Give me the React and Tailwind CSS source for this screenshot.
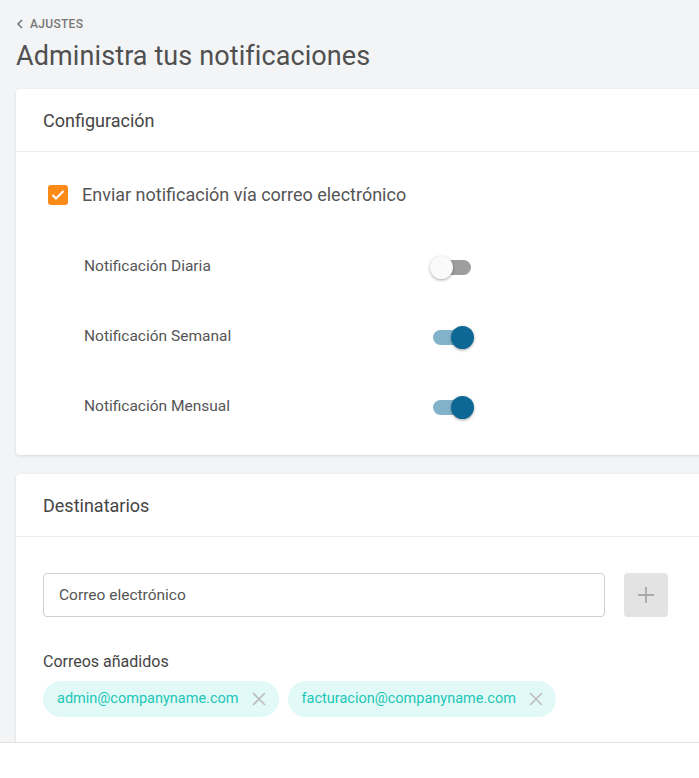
import { useState } from "react";

function Toggle({ on, onChange }) {
  return (
    <button
      type="button"
      onClick={() => onChange(!on)}
      className="relative w-[44px] h-[24px] flex items-center"
    >
      <span
        className={
          on
            ? "absolute left-[3px] w-[38px] h-[15px] rounded-full bg-[#82b3cb]"
            : "absolute left-[3px] w-[38px] h-[15px] rounded-full bg-[#9e9e9e]"
        }
      />
      <span
        className={
          on
            ? "absolute left-[21px] w-[23px] h-[23px] rounded-full bg-[#0e6896] shadow-[0_1px_3px_rgba(0,0,0,0.35)]"
            : "absolute left-0 w-[23px] h-[23px] rounded-full bg-[#fafafa] shadow-[0_1px_3px_rgba(0,0,0,0.35)]"
        }
      />
    </button>
  );
}

function Chip({ email, onRemove }) {
  return (
    <div className="h-[36px] pl-[14px] pr-[12px] rounded-full bg-[#e2faf7] flex items-center gap-[12px]">
      <span className="text-[14.5px] text-[#1bc6b6]">{email}</span>
      <button onClick={onRemove} className="text-[#bdbdbd]">
        <svg width="16" height="16" viewBox="0 0 16 16" fill="none" stroke="currentColor" strokeWidth="1.6">
          <path d="M2 2 L14 14 M14 2 L2 14" />
        </svg>
      </button>
    </div>
  );
}

export default function App() {
  const [email, setEmail] = useState(true);
  const [daily, setDaily] = useState(false);
  const [weekly, setWeekly] = useState(true);
  const [monthly, setMonthly] = useState(true);
  const [recipients, setRecipients] = useState([
    "admin@companyname.com",
    "facturacion@companyname.com",
  ]);

  const rows = [
    { label: "Notificación Diaria", on: daily, set: setDaily },
    { label: "Notificación Semanal", on: weekly, set: setWeekly },
    { label: "Notificación Mensual", on: monthly, set: setMonthly },
  ];

  return (
    <div
      className="h-screen flex flex-col overflow-hidden bg-[#f3f4f5]"
      style={{ fontFamily: "Roboto, 'Liberation Sans', sans-serif" }}
    >
      <div className="flex-1 min-h-0 overflow-hidden">
        <div className="w-[740px] pl-4 pt-[16px]">
          {/* Breadcrumb */}
          <a href="#" className="flex items-center gap-[6px] text-[#777] h-[16px]">
            <svg width="8" height="10" viewBox="0 0 8 10" fill="none" stroke="currentColor" strokeWidth="1.6">
              <path d="M6 1 L2 5 L6 9" />
            </svg>
            <span className="text-[12px] font-medium tracking-[0.3px]">AJUSTES</span>
          </a>
          <h1 className="text-[27px] text-[#505050] mt-[8px] leading-[32px] tracking-[0.1px]">
            Administra tus notificaciones
          </h1>

          {/* Configuración */}
          <section className="mt-[17px] bg-white rounded-[4px] shadow-[0_1px_3px_rgba(0,0,0,0.12)]">
            <div className="h-[63px] px-[27px] flex items-center border-b border-[#ececec]">
              <h2 className="text-[18px] text-[#454545]">Configuración</h2>
            </div>
            <div className="px-[32px] pt-[29px] pb-[36px]">
              <label className="flex items-center gap-[14px] cursor-pointer">
                <span
                  onClick={() => setEmail(!email)}
                  className="w-[20px] h-[20px] rounded-[3px] bg-[#fb8a17] flex items-center justify-center"
                >
                  {email && (
                    <svg width="14" height="12" viewBox="0 0 14 12" fill="none" stroke="white" strokeWidth="2">
                      <path d="M1.5 6 L5 9.5 L12.5 2" />
                    </svg>
                  )}
                </span>
                <span className="text-[18px] text-[#555]">Enviar notificación vía correo electrónico</span>
              </label>

              <div className="mt-[47px] pl-[36px] flex flex-col gap-[46px]">
                {rows.map((r) => (
                  <div key={r.label} className="flex items-center w-[390px] justify-between">
                    <span className="text-[15.5px] text-[#555]">{r.label}</span>
                    <Toggle on={r.on} onChange={r.set} />
                  </div>
                ))}
              </div>
            </div>
          </section>

          {/* Destinatarios */}
          <section className="mt-[19px] bg-white rounded-[4px] shadow-[0_1px_3px_rgba(0,0,0,0.12)] h-[400px]">
            <div className="h-[63px] px-[27px] flex items-center border-b border-[#ececec]">
              <h2 className="text-[18px] text-[#454545]">Destinatarios</h2>
            </div>
            <div className="px-[27px] pt-[36px]">
              <div className="flex items-center gap-[19px]">
                <input
                  placeholder="Correo electrónico"
                  className="w-[562px] h-[44px] px-[15px] border border-[#d0d0d0] rounded-[4px] text-[15.5px] text-[#555] placeholder:text-[#555] outline-none"
                />
                <button className="w-[44px] h-[44px] rounded-[4px] bg-[#e3e3e3] flex items-center justify-center text-[#a8a8a8]">
                  <svg width="18" height="18" viewBox="0 0 18 18" fill="none" stroke="currentColor" strokeWidth="1.8">
                    <path d="M9 1 V17 M1 9 H17" />
                  </svg>
                </button>
              </div>
              <h3 className="mt-[33px] text-[16px] text-[#454545]">Correos añadidos</h3>
              <div className="mt-[7px] flex gap-[9px]">
                {recipients.map((r) => (
                  <Chip
                    key={r}
                    email={r}
                    onRemove={() => setRecipients(recipients.filter((x) => x !== r))}
                  />
                ))}
              </div>
            </div>
          </section>
        </div>
      </div>
      <footer className="h-[36px] shrink-0 bg-white border-t border-[#e3e3e3]" />
    </div>
  );
}
